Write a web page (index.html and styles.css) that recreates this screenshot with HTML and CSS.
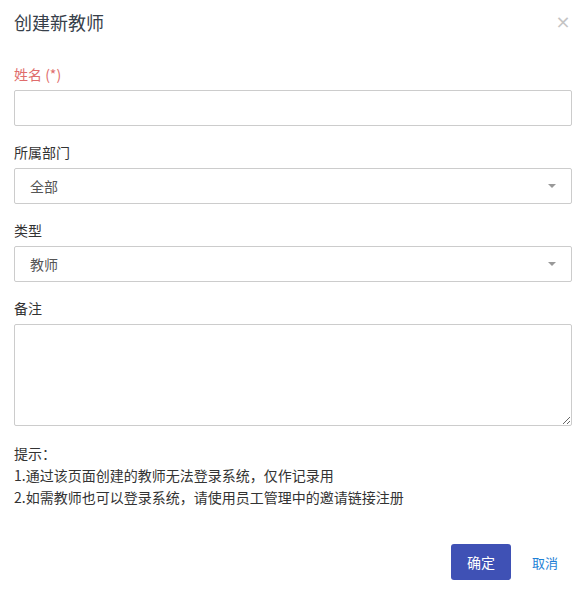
FILE: index.html
```html
<!DOCTYPE html>
<html lang="zh-CN">
<head>
  <meta charset="UTF-8">
  <meta name="viewport" content="width=device-width, initial-scale=1.0">
  <title>创建新教师</title>
  <link rel="stylesheet" href="styles.css">
</head>
<body>
  <div class="dialog">
    <div class="dialog-header">
      <h2 class="dialog-title">创建新教师</h2>
      <span class="close">&times;</span>
    </div>

    <div class="form-group">
      <label class="required">姓名 (*)</label>
      <input type="text" class="form-control">
    </div>

    <div class="form-group">
      <label>所属部门</label>
      <div class="select">
        <span>全部</span>
        <i class="caret"></i>
      </div>
    </div>

    <div class="form-group">
      <label>类型</label>
      <div class="select">
        <span>教师</span>
        <i class="caret"></i>
      </div>
    </div>

    <div class="form-group">
      <label>备注</label>
      <textarea class="form-control remark"></textarea>
    </div>

    <div class="tips">
      <p>提示：</p>
      <p>1.通过该页面创建的教师无法登录系统，仅作记录用</p>
      <p>2.如需教师也可以登录系统，请使用员工管理中的邀请链接注册</p>
    </div>

    <div class="dialog-footer">
      <button class="btn btn-primary">确定</button>
      <button class="btn btn-link">取消</button>
    </div>
  </div>
</body>
</html>
```

FILE: styles.css
```css
body {
  margin: 0;
  background: #fff;
  font-family: "Noto Sans CJK SC", "Noto Sans", sans-serif;
  font-size: 14px;
  color: #333;
}
.dialog {
  padding: 10px 10px 0 14px;
}
.dialog-header {
  display: flex;
  justify-content: space-between;
  align-items: center;
  height: 24px;
  margin-bottom: 30px;
}
.dialog-title {
  margin: 0;
  font-size: 18px;
  font-weight: normal;
  line-height: 24px;
  color: #37404a;
}
.close {
  width: 18px;
  text-align: center;
  font-family: "DejaVu Sans", sans-serif;
  font-size: 18px;
  line-height: 24px;
  color: #c4c4c4;
}
.form-group {
  margin-bottom: 16px;
}
.form-group label {
  display: block;
  line-height: 20px;
  margin-bottom: 6px;
  color: #333;
}
.form-group label.required {
  color: #e06c6c;
}
.form-control {
  display: block;
  box-sizing: border-box;
  width: 100%;
  height: 36px;
  border: 1px solid #ccc;
  border-radius: 2px;
  padding: 6px 12px;
  font-family: inherit;
  font-size: 14px;
  background: #fff;
}
.remark {
  height: 102px;
  resize: vertical;
}
.select {
  box-sizing: border-box;
  height: 36px;
  border: 1px solid #ccc;
  border-radius: 2px;
  padding: 0 15px 0 15px;
  display: flex;
  align-items: center;
  justify-content: space-between;
  color: #555;
}
.caret {
  width: 0;
  height: 0;
  border-left: 4px solid transparent;
  border-right: 4px solid transparent;
  border-top: 4px solid #999;
}
.tips {
  margin-top: 16px;
}
.tips p {
  margin: 0;
  line-height: 22px;
  color: #333;
}
.dialog-footer {
  display: flex;
  justify-content: flex-end;
  align-items: center;
  margin-top: 36px;
  gap: 6px;
}
.btn {
  border: none;
  font-family: inherit;
  cursor: pointer;
}
.btn-primary {
  width: 60px;
  height: 36px;
  border-radius: 3px;
  background: #3f51b5;
  color: #fff;
  font-size: 14px;
}
.btn-link {
  height: 36px;
  padding: 0 14px 0 15px;
  background: none;
  color: #1e7fd6;
  font-size: 13px;
}
```
